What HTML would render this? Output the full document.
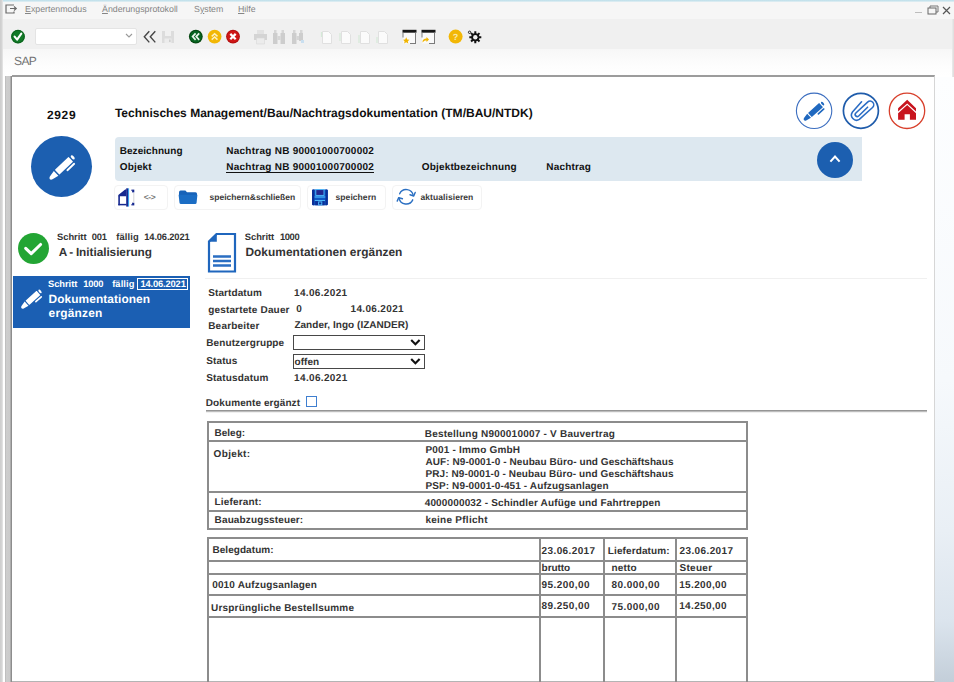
<!DOCTYPE html>
<html lang="de">
<head>
<meta charset="utf-8">
<title>SAP</title>
<style>
*{box-sizing:border-box;margin:0;padding:0}
html,body{width:954px;height:682px;overflow:hidden;background:#fff}
body{position:relative;font-family:"Liberation Sans",Arial,sans-serif;color:#333;font-weight:bold;font-size:10px;text-rendering:geometricPrecision}
.abs{position:absolute}
.t{position:absolute;white-space:pre;line-height:1}
/* chrome */
#menubar{left:0;top:0;width:954px;height:19px;background:#f6f6f6}
#topline{left:0;top:0;width:954px;height:2px;background:linear-gradient(#b9dde9,#e4f0f4)}
#toolbar{left:0;top:19px;width:954px;height:30px;background:#f0f0f0}
#titlebar{left:0;top:49px;width:954px;height:27px;background:linear-gradient(#f7f7f7,#fdfdfd 60%,#fff)}
.menu{font-weight:normal;font-size:8.8px;color:#858585;top:5px}
.menu u{text-decoration-thickness:1px;text-underline-offset:1px}
#leftstrip{left:0;top:0;width:3px;height:682px;background:linear-gradient(90deg,#cdcdcd,#d6d6d6 2px,#ececec)}
#leftbar{left:5px;top:76px;width:7px;height:606px;background:linear-gradient(90deg,#b4b4b4 0,#cdcdcd 1.200px,#cbcbcb 5px,#909090 6px,#8a8a8a 7px)}
#panel{left:12px;top:75px;width:923px;height:607px;background:#fff;border-top:2px solid #9c9c9c;border-right:1px solid #d6d6d6;border-bottom:1px solid #b4b4b4}
#rightstrip{left:935px;top:77px;width:19px;height:605px;background:linear-gradient(#fdfeff 0,#f6f9fc 50%,#e9eff5 75%,#dbe4ed 90%,#c3ced9 100%)}
#rightedge{left:952px;top:19px;width:2px;height:663px;background:linear-gradient(90deg,#ececec,#dcdcdc)}
/* header */
#infobar{left:115px;top:137px;width:747px;height:44px;background:#dde8f0;border-radius:4px 0 0 4px}
.btn{position:absolute;top:185px;height:25px;background:#fff;border:1px solid #f3f3f3;border-radius:4px}
.bt{font-size:8.5px;color:#3a3a3a}
.circ{position:absolute;border-radius:50%}
/* table */
table.g{position:absolute;table-layout:fixed;border-collapse:separate;border-spacing:0;border:1px solid #8c8c8c;font-size:10px;font-weight:bold;color:#333}
table.g td{position:relative;border:1px solid #8c8c8c;vertical-align:top;padding:0;white-space:pre;line-height:12px}
</style>
</head>
<body>
<!-- window chrome -->
<div class="abs" id="menubar"></div>
<div class="abs" id="topline"></div>
<div class="abs" id="toolbar"></div>
<div class="abs" id="titlebar"></div>
<div class="abs" id="leftstrip"></div>
<div class="abs" id="rightedge"></div>

<!-- menu -->
<svg class="abs" style="left:5px;top:4px" width="14" height="11" viewBox="0 0 14 11"><path d="M9 1H1v8h8V7.5" fill="none" stroke="#6a6a6a" stroke-width="1.2"/><path d="M5 4.5h6M9 2.5l2.3 2-2.3 2" fill="none" stroke="#6a6a6a" stroke-width="1.1"/></svg>
<span class="t menu" style="left:25px"><u>E</u>xpertenmodus</span>
<span class="t menu" style="left:102px"><u>Ä</u>nderungsprotokoll</span>
<span class="t menu" style="left:194px">S<u>y</u>stem</span>
<span class="t menu" style="left:238px"><u>H</u>ilfe</span>
<!-- window buttons -->
<div class="abs" style="left:915px;top:12px;width:7px;height:1px;background:#bdbdbd"></div>
<svg class="abs" style="left:927px;top:5px" width="12" height="10" viewBox="0 0 12 10"><path d="M3 3V1h8v6H9" fill="none" stroke="#777" stroke-width="1"/><rect x="1" y="3" width="8" height="6" fill="#f6f6f6" stroke="#666" stroke-width="1"/></svg>
<svg class="abs" style="left:942px;top:6px" width="9" height="9" viewBox="0 0 9 9"><path d="M1 1l7 7M8 1l-7 7" stroke="#555" stroke-width="1.2"/></svg>

<!-- toolbar -->
<!-- green check -->
<svg class="abs" style="left:10px;top:29px" width="16" height="16" viewBox="0 0 16 16"><circle cx="8" cy="7.6" r="6.9" fill="#117a27"/><circle cx="8" cy="7.6" r="6.2" fill="none" stroke="#0b5a1b" stroke-width=".8"/><path d="M4.6 7.6l2.5 3 4.2-6" fill="none" stroke="#fff" stroke-width="2.1" stroke-linecap="round" stroke-linejoin="round"/></svg>
<!-- command field -->
<div class="abs" style="left:35px;top:28px;width:102px;height:17px;background:#fff;border:1px solid #e4e4e4;border-radius:2px"></div>
<svg class="abs" style="left:125px;top:33px" width="8" height="6" viewBox="0 0 8 6"><path d="M1 1l3 3 3-3" fill="none" stroke="#9a9a9a" stroke-width="1.1"/></svg>
<!-- double chevron -->
<svg class="abs" style="left:143px;top:30px" width="14" height="14" viewBox="0 0 14 14"><path d="M6.3 1.2L1.3 6.8l5 5.6M12.3 1.2L7.3 6.8l5 5.6" fill="none" stroke="#454545" stroke-width="1.4"/></svg>
<!-- save disabled -->
<svg class="abs" style="left:161px;top:30px" width="14" height="14" viewBox="0 0 14 14"><path d="M1 1h12v12H1z" fill="#dcdcdc"/><path d="M4 1h6v5H4z" fill="#f0f0f0"/><path d="M3.5 8.5h7V13h-7z" fill="#ececec"/><path d="M8 9.5h1.6v2.6H8z" fill="#cfcfcf"/></svg>
<!-- back / exit / cancel -->
<svg class="abs" style="left:188px;top:29px" width="16" height="16" viewBox="0 0 16 16"><circle cx="7.8" cy="7.6" r="6.900" fill="#04450f"/><circle cx="7.8" cy="7.6" r="5.900" fill="#076320"/><path d="M7.6 4.4L4.6 7.6l3 3.2M11.2 4.4l-3 3.2 3 3.2" fill="none" stroke="#e9f5ea" stroke-width="1.7"/></svg>
<svg class="abs" style="left:207px;top:29px" width="16" height="16" viewBox="0 0 16 16"><circle cx="7.6" cy="7.6" r="6.9" fill="#f2b705"/><path d="M4.7 7.4l2.9-2.6 2.9 2.6M4.7 10.6l2.9-2.6 2.9 2.6" fill="none" stroke="#fdf0c0" stroke-width="1.5"/></svg>
<svg class="abs" style="left:225px;top:29px" width="16" height="16" viewBox="0 0 16 16"><circle cx="8" cy="7.6" r="6.900" fill="#b30f0f"/><circle cx="8" cy="7.6" r="5.900" fill="#cf1616"/><path d="M5.3 4.9l5.4 5.4M10.7 4.9l-5.4 5.4" fill="none" stroke="#fff" stroke-width="2.2"/></svg>
<!-- print (disabled) -->
<svg class="abs" style="left:253px;top:29px" width="15" height="16" viewBox="0 0 15 16"><path d="M4 1h7v4H4z" fill="#e2e2e2"/><path d="M1 5h13v6H1z" fill="#d4d4d4"/><path d="M3.5 9h8v6h-8z" fill="#ececec" stroke="#d8d8d8" stroke-width=".6"/></svg>
<!-- find / find next (disabled) -->
<svg class="abs" style="left:272px;top:29px" width="14" height="16" viewBox="0 0 14 16"><path d="M1 4h4.5v11H1zM8.500 4H13v11H8.500z" fill="#cdcdcd"/><path d="M2 1h2.500v3H2zM9.500 1H12v3H9.500zM5.500 7h3v4h-3z" fill="#d6d6d6"/></svg>
<svg class="abs" style="left:291px;top:29px" width="14" height="16" viewBox="0 0 14 16"><path d="M1 4h4.500v11H1zM8 4h4v8H8z" fill="#cdcdcd"/><path d="M2 1h2.500v3H2zM9 1h2.500v3H9zM5.500 7H8v4H5.500z" fill="#d6d6d6"/><path d="M10 11h3v3h-3z" fill="#c9dff0"/></svg>
<!-- pages (disabled) -->
<svg class="abs" style="left:320px;top:30px" width="70" height="15" viewBox="0 0 70 15"><g fill="#fbfbfb" stroke="#e0e0e0" stroke-width="1"><path d="M2.500 1.500h6l3 3v9h-9z"/><path d="M21.500 1.500h6l3 3v9h-9z"/><path d="M40.500 1.500h6l3 3v9h-9z"/><path d="M58.500 1.500h6l3 3v9h-9z"/></g><g fill="none" stroke="#d5ead8" stroke-width="1.2"><path d="M1.500 2v5"/><path d="M20 3v8"/><path d="M39 5v8"/><path d="M57 7v6"/></g></svg>
<!-- window icons -->
<svg class="abs" style="left:402px;top:29px" width="15" height="16" viewBox="0 0 15 16"><path d="M1 2.500h13v12H1z" fill="#fafafa"/><path d="M.5 .800h14v2.900H.5z" fill="#161616"/><path d="M13.500 3.500v11M8 14.500h6M1 3.500v5" fill="none" stroke="#7b7b7b" stroke-width="1"/><path d="M4.200 8.300l1 2.100 2.300.3-1.700 1.500.5 2.300-2.100-1.200-2 1.200.4-2.300L1 10.700l2.200-.3z" fill="#f0b400"/></svg>
<svg class="abs" style="left:421px;top:29px" width="15" height="16" viewBox="0 0 15 16"><path d="M1 2.500h13v12H1z" fill="#fafafa"/><path d="M.5 .800h14v2.900H.5z" fill="#161616"/><path d="M13.500 3.500v11M8 14.500h6M1 3.500v5" fill="none" stroke="#7b7b7b" stroke-width="1"/><path d="M1.500 13.500c0-3 1.500-4 4-4V8l2.500 2.500L5.500 13v-1.500c-1.500 0-2.500.3-4 2z" fill="#f0b400"/></svg>
<!-- help -->
<svg class="abs" style="left:448px;top:29px" width="16" height="16" viewBox="0 0 16 16"><circle cx="7.600" cy="7.600" r="7" fill="#f2b705"/><text x="7.600" y="11" text-anchor="middle" font-family="Liberation Sans,sans-serif" font-weight="bold" font-size="9" fill="#fbe9a8">?</text></svg>
<!-- gear -->
<svg class="abs" style="left:467px;top:29px" width="16" height="16" viewBox="0 0 16 16"><g stroke="#111" stroke-width="2"><path d="M8.300 2.300v12M2.300 8.300h12M4.100 4.100l8.400 8.400M12.500 4.100L4.100 12.500"/></g><circle cx="8.300" cy="8.300" r="4.100" fill="#111"/><circle cx="8.300" cy="8.300" r="2.200" fill="#f0f0f0"/><circle cx="2.600" cy="3.300" r="1.200" fill="#f0f0f0" stroke="#111" stroke-width=".9"/></svg>

<span class="t" style="left:14px;top:55px;font-weight:normal;font-size:12px;letter-spacing:-.6px;color:#727272">SAP</span>

<!-- content panel -->
<div class="abs" id="leftbar"></div>
<div class="abs" id="panel"></div>
<div class="abs" id="rightstrip"></div>

<!--CONTENT-->
<span class="t" style="left:46.88px;top:109px;font-size:12px;letter-spacing:0.681px;color:#111">2929</span>
<span class="t" style="left:114.88px;top:107px;font-size:12px;letter-spacing:0.011px;color:#111">Technisches Management/Bau/Nachtragsdokumentation (TM/BAU/NTDK)</span>
<div class="circ" style="left:31px;top:136px;width:61px;height:61px;background:#1c5fb0"></div>
<svg class="abs" style="left:40px;top:145px" width="44" height="44" viewBox="40 145 44 44"><g transform="translate(49.6 179.5) rotate(-43.7) scale(1)" fill="#fff"><path d="M.4 0C.4-.9 1.200-1.500 2.200-1.900L9-3.300V3.300L2.200 1.900C1.200 1.500 .4 .9 .4 0z"/><rect x="10.400" y="-3.300" width="18.900" height="6.600" rx=".5"/><ellipse cx="32" cy="0" rx="1.400" ry="2.500"/><path d="M19.300 5.600H28.600" stroke="#fff" stroke-width="1.900" stroke-linecap="round" fill="none"/></g></svg>
<div class="abs" id="infobar"></div>
<span class="t" style="left:119.70px;top:147px;letter-spacing:0.057px;color:#111">Bezeichnung</span>
<span class="t" style="left:226.20px;top:147px;letter-spacing:0.260px;color:#111">Nachtrag NB 90001000700002</span>
<span class="t" style="left:119.70px;top:163px;letter-spacing:0.176px;color:#111">Objekt</span>
<span class="t" style="left:226.20px;top:163px;letter-spacing:0.260px;color:#111">Nachtrag NB 90001000700002</span>
<div class="abs" style="left:226px;top:172px;width:148px;height:1px;background:#111"></div>
<span class="t" style="left:421.80px;top:163px;letter-spacing:0.160px;color:#111">Objektbezeichnung</span>
<span class="t" style="left:546.30px;top:163px;letter-spacing:0.179px;color:#111">Nachtrag</span>
<div class="circ" style="left:817px;top:142px;width:36px;height:36px;background:#1c5fb0"></div>
<svg class="abs" style="left:827px;top:152px" width="16" height="14" viewBox="827 152 16 14"><path d="M830.400 161.700L835 156.600L839.600 161.700" fill="none" stroke="#fff" stroke-width="2"/></svg>
<svg class="abs" style="left:794px;top:90px" width="134" height="42" viewBox="794 90 134 42"><circle cx="814.100" cy="110.800" r="17.700" fill="#fff" stroke="#3d6fc0" stroke-width="1.100"/><circle cx="860.900" cy="110.800" r="17.500" fill="#fff" stroke="#1f5cab" stroke-width="1.700"/><circle cx="907" cy="110.800" r="17.700" fill="#fff" stroke="#d8402c" stroke-width="1.300"/></svg>
<svg class="abs" style="left:800px;top:97px" width="30" height="28" viewBox="800 97 30 28"><g transform="translate(803.8 120.5) rotate(-42) scale(0.79 0.86)" fill="#1f68bf"><path d="M.4 0C.4-.9 1.200-1.500 2.200-1.900L9-3.300V3.300L2.200 1.900C1.200 1.500 .4 .9 .4 0z"/><rect x="10.400" y="-3.300" width="18.900" height="6.600" rx=".5"/><ellipse cx="32" cy="0" rx="1.400" ry="2.500"/><path d="M19.300 5.600H28.600" stroke="#1f68bf" stroke-width="1.900" stroke-linecap="round" fill="none"/></g></svg>
<svg class="abs" style="left:846px;top:96px" width="30" height="30" viewBox="846 96 30 30"><g transform="translate(861.300 111.200) rotate(-42.500) scale(1.080)"><path d="M6.100 -6.300L-6.500 -5A4.800 4.800 0 0 0 -6.500 4.400L10 4.500A3.400 3.400 0 0 0 10 -2.300L-4.800 -2.200A1.900 1.900 0 0 0 -4.800 1.600L6.800 1.200" fill="none" stroke="#2a6cc4" stroke-width="1.450" stroke-linecap="round" stroke-linejoin="round"/></g></svg>
<svg class="abs" style="left:897px;top:99px" width="20" height="22" viewBox="897 99 20 22"><g fill="#c8141e"><path d="M907.200 99.800L916 108.300V111.500L907.200 103.600L898.100 111.500V108.300z"/><path d="M907.200 105L916 113.200V119.700H909.900V114.200H904.600V119.700H898.100V113.200z"/></g></svg>
<div class="btn" style="left:113.500px;width:54.500px"></div>
<svg class="abs" style="left:116px;top:187px" width="22" height="21" viewBox="116 187 22 21"><path d="M119.100 205.300V195.500L126 189.900" fill="none" stroke="#16288f" stroke-width="1.600"/><path d="M118.300 204.600H126.500" stroke="#16288f" stroke-width="1.500"/><path d="M118.300 196.200L126.300 189.400V196.200z" fill="#16288f"/><rect x="126.200" y="188.300" width="1.800" height="18.300" fill="#16288f"/><rect x="128" y="188.300" width="1.100" height="18.300" fill="#3aa0e8"/><rect x="132.100" y="189.600" width="2.200" height="2.800" fill="#16288f"/><rect x="132.100" y="202.700" width="2.200" height="2.700" fill="#16288f"/><rect x="131" y="189.600" width="1.200" height="1.300" fill="#16288f" opacity=".6"/><rect x="131" y="204.100" width="1.200" height="1.300" fill="#16288f" opacity=".6"/><path d="M133.800 193V202.300" stroke="#cfcfcf" stroke-width=".9"/></svg>
<span class="t" style="left:143.69px;top:193px;font-size:8.5px;letter-spacing:-0.320px;color:#777">&lt;-&gt;</span>
<div class="btn" style="left:174px;width:127px"></div>
<svg class="abs" style="left:177px;top:189px" width="22" height="17" viewBox="177 189 22 17"><path d="M179 192.400Q179 190.600 180.600 190.600H185.400L187 192.300H195.500Q197 192.300 197 193.800V195H179z" fill="#1762b8"/><path d="M178.600 194.700H197.400L196.600 202.700Q196.500 204.100 195.100 204.100H181Q179.600 204.100 179.500 202.700z" fill="#1b6dc4"/></svg>
<span class="t" style="left:209.49px;top:193px;font-size:8.5px;letter-spacing:0.012px;color:#3a3a3a">speichern&amp;schließen</span>
<div class="btn" style="left:307px;width:79px"></div>
<svg class="abs" style="left:311px;top:188px" width="18" height="19" viewBox="311 188 18 19"><rect x="312" y="189.400" width="15.800" height="15.900" rx="1.200" fill="#0f57c4"/><path d="M312 190.600Q312 189.400 313.200 189.400H314.300V205.300H313.200Q312 205.300 312 204.100zM327.800 190.600Q327.800 189.400 326.600 189.400H325.500V205.300H326.600Q327.800 205.300 327.800 204.100z" fill="#0b2f96"/><rect x="315.800" y="189.600" width="8.200" height="5.800" fill="#23278f" stroke="#52c0ff" stroke-width=".9"/><path d="M314.600 197H325.300" stroke="#52c0ff" stroke-width="1.100"/><path d="M314.800 200.600H325" stroke="#52c0ff" stroke-width="1"/><rect x="315.200" y="201.100" width="9.400" height="4.200" fill="#0b2f96"/><rect x="318.600" y="201.900" width="3.200" height="3" fill="none" stroke="#52c0ff" stroke-width=".9"/></svg>
<span class="t" style="left:335.59px;top:193px;font-size:8.5px;letter-spacing:0.058px;color:#3a3a3a">speichern</span>
<div class="btn" style="left:392px;width:90px"></div>
<svg class="abs" style="left:394px;top:186px" width="24" height="22" viewBox="394 186 24 22"><g transform="translate(395 187) translate(11.200 9.800) scale(.900) translate(-11.200 -9.800)" fill="none" stroke="#2a6fc2" stroke-width="1.550" stroke-linecap="round" stroke-linejoin="round"><path d="M3.950 6.420A8 8 0 0 1 19.080 8.410"/><path d="M18.450 13.180A8 8 0 0 1 3.320 11.190"/><path d="M21.200 5L19.600 8.900L15.400 7.500"/><path d="M1.200 14.600L2.900 10.700L7 12"/></g></svg>
<span class="t" style="left:420.49px;top:193px;font-size:8.5px;letter-spacing:0.071px;color:#3a3a3a">aktualisieren</span>
<div class="circ" style="left:18px;top:233px;width:31px;height:31px;background:#23a534"></div>
<svg class="abs" style="left:22px;top:238px" width="23" height="21" viewBox="22 238 23 21"><path d="M25.700 248.300L31.200 253.600L40.600 244.500" fill="none" stroke="#fff" stroke-width="3.100" stroke-linecap="round" stroke-linejoin="round"/></svg>
<span class="t" style="left:57.04px;top:233px;font-size:9.35px;letter-spacing:-0.015px">Schritt</span>
<span class="t" style="left:91.64px;top:233px;font-size:9.35px;letter-spacing:-0.090px">001</span>
<span class="t" style="left:116.34px;top:233px;font-size:9.35px;letter-spacing:0.101px">fällig</span>
<span class="t" style="left:144.34px;top:233px;font-size:9.35px;letter-spacing:-0.164px">14.06.2021</span>
<span class="t" style="left:58.69px;top:247px;font-size:11.8px;letter-spacing:-0.043px;word-spacing:-.6px">A - Initialisierung</span>
<div class="abs" style="left:13px;top:276px;width:177px;height:52px;background:#1b5fb3"></div>
<svg class="abs" style="left:18px;top:286px" width="28" height="26" viewBox="18 286 28 26"><g transform="translate(21.3 308.4) rotate(-42.2) scale(0.79 0.86)" fill="#fff"><path d="M.4 0C.4-.9 1.200-1.500 2.200-1.900L9-3.300V3.300L2.200 1.900C1.200 1.500 .4 .9 .4 0z"/><rect x="10.400" y="-3.300" width="18.900" height="6.600" rx=".5"/><ellipse cx="32" cy="0" rx="1.400" ry="2.500"/><path d="M19.300 5.600H28.600" stroke="#fff" stroke-width="1.900" stroke-linecap="round" fill="none"/></g></svg>
<span class="t" style="left:47.94px;top:280px;font-size:9.35px;letter-spacing:-0.032px;color:#fff">Schritt</span>
<span class="t" style="left:83.24px;top:280px;font-size:9.35px;letter-spacing:-0.160px;color:#fff">1000</span>
<span class="t" style="left:112.14px;top:280px;font-size:9.35px;letter-spacing:0.101px;color:#fff">fällig</span>
<div class="abs" style="left:137px;top:278px;width:50.500px;height:12px;border:1px solid #fff"></div>
<span class="t" style="left:140.44px;top:280px;font-size:9.35px;letter-spacing:-0.153px;color:#fff">14.06.2021</span>
<span class="t" style="left:48.59px;top:294px;font-size:11.9px;letter-spacing:0.074px;color:#fff">Dokumentationen</span>
<span class="t" style="left:48.59px;top:308px;font-size:11.9px;letter-spacing:0.212px;color:#fff">ergänzen</span>
<svg class="abs" style="left:207px;top:232px" width="30" height="41" viewBox="0 0 30 41"><path d="M9.500 2H28v37.500H2V9.500z" fill="#fff" stroke="#1f66bd" stroke-width="2.200" stroke-linejoin="miter"/><path d="M1.500 9.800L9.800 1.500v8.300z" fill="#1f66bd"/><path d="M6 24.500h18M6 29h18M6 33.500h18" stroke="#2a6ec2" stroke-width="2.400"/></svg>
<span class="t" style="left:244.84px;top:233px;font-size:9.35px;letter-spacing:-0.032px">Schritt</span>
<span class="t" style="left:280.04px;top:233px;font-size:9.35px;letter-spacing:-0.400px">1000</span>
<span class="t" style="left:245.39px;top:247px;font-size:11.9px;letter-spacing:0.047px">Dokumentationen ergänzen</span>
<div class="abs" style="left:205px;top:278px;width:722px;height:1px;background:#f0f0f0"></div>
<span class="t" style="left:208.20px;top:289px;letter-spacing:0.102px">Startdatum</span>
<span class="t" style="left:294.10px;top:289px;letter-spacing:0.328px">14.06.2021</span>
<span class="t" style="left:208.20px;top:306px;letter-spacing:0.159px">gestartete Dauer</span>
<span class="t" style="left:296.30px;top:305px;letter-spacing:0.338px">0</span>
<span class="t" style="left:350.50px;top:305px;letter-spacing:0.339px">14.06.2021</span>
<span class="t" style="left:208.20px;top:322px;letter-spacing:0.203px">Bearbeiter</span>
<span class="t" style="left:294.40px;top:321px;letter-spacing:0.032px">Zander, Ingo (IZANDER)</span>
<span class="t" style="left:206.30px;top:339px;letter-spacing:0.087px">Benutzergruppe</span>
<div class="abs" style="left:293px;top:335px;width:132px;height:15px;border:1px solid #484848;background:#fff"></div>
<svg class="abs" style="left:409px;top:338px" width="13" height="9" viewBox="409 338 13 9"><path d="M411.200 340L415.400 344.300L419.600 340" fill="none" stroke="#111" stroke-width="2.100"/></svg>
<span class="t" style="left:206.30px;top:357px;letter-spacing:0.108px">Status</span>
<div class="abs" style="left:293px;top:354px;width:132px;height:15px;border:1px solid #484848;background:#fff"></div>
<span class="t" style="left:294.60px;top:358px;letter-spacing:0.015px">offen</span>
<svg class="abs" style="left:409px;top:357px" width="13" height="9" viewBox="409 357 13 9"><path d="M411.200 359L415.400 363.300L419.600 359" fill="none" stroke="#111" stroke-width="2.100"/></svg>
<span class="t" style="left:206.30px;top:374px;letter-spacing:0.144px">Statusdatum</span>
<span class="t" style="left:294.10px;top:374px;letter-spacing:0.339px">14.06.2021</span>
<span class="t" style="left:205.80px;top:399px;letter-spacing:0.088px">Dokumente ergänzt</span>
<div class="abs" style="left:306px;top:396px;width:11px;height:11px;border:1px solid #3f7fd0;background:#fff"></div>
<div class="abs" style="left:206px;top:410px;width:721px;height:3px;background:linear-gradient(#959595 0,#959595 33%,#bdbdbd 34%,#bdbdbd 66%,#f0f0f0 67%)"></div>
<table class="g" style="left:207px;top:421px;width:541px" cellspacing="0">
<tr style="height:19px">
<td style="width:215px;border-right:0"><span class="t" style="left:5.60px;top:5px;line-height:12px;letter-spacing:-0.012px">Beleg:</span></td>
<td style="border-left:0"><span class="t" style="left:1.70px;top:6px;line-height:12px;letter-spacing:0.223px">Bestellung N900010007 - V Bauvertrag</span></td>
</tr>
<tr style="height:51px">
<td style="border-right:0"><span class="t" style="left:4.60px;top:7px;line-height:12px;letter-spacing:0.342px">Objekt:</span></td>
<td style="border-left:0"><span class="t" style="left:2.40px;top:3px;line-height:12px;letter-spacing:0.201px">P001 - Immo GmbH</span><span class="t" style="left:2.40px;top:15px;line-height:12px;letter-spacing:0.079px">AUF: N9-0001-0 - Neubau Büro- und Geschäftshaus</span><span class="t" style="left:2.40px;top:27px;line-height:12px;letter-spacing:0.103px">PRJ: N9-0001-0 - Neubau Büro- und Geschäftshaus</span><span class="t" style="left:2.40px;top:39px;line-height:12px;letter-spacing:0.120px">PSP: N9-0001-0-451 - Aufzugsanlagen</span></td>
</tr>
<tr style="height:19px">
<td style="border-right:0"><span class="t" style="left:5.60px;top:4px;line-height:12px;letter-spacing:0.160px">Lieferant:</span></td>
<td style="border-left:0"><span class="t" style="left:1.70px;top:5px;line-height:12px;letter-spacing:0.149px">4000000032 - Schindler Aufüge und Fahrtreppen</span></td>
</tr>
<tr style="height:18px">
<td style="border-right:0"><span class="t" style="left:5.60px;top:3px;line-height:12px;letter-spacing:0.128px">Bauabzugssteuer:</span></td>
<td style="border-left:0"><span class="t" style="left:2.40px;top:3px;line-height:12px;letter-spacing:0.266px">keine Pflicht</span></td>
</tr>
</table>
<table class="g" style="left:207px;top:537px;width:541px" cellspacing="0">
<tr style="height:23px">
<td style="width:332px"><span class="t" style="left:3.40px;top:6px;line-height:12px;letter-spacing:0.064px">Belegdatum:</span></td>
<td style="width:64px"><span class="t" style="left:0.60px;top:7px;line-height:12px;letter-spacing:0.383px">23.06.2017</span></td>
<td style="width:72px"><span class="t" style="left:2.80px;top:7px;line-height:12px;letter-spacing:0.113px">Lieferdatum:</span></td>
<td style="width:71px"><span class="t" style="left:2.50px;top:7px;line-height:12px;letter-spacing:0.394px">23.06.2017</span></td>
</tr>
<tr style="height:13px">
<td></td>
<td><span class="t" style="left:0.60px;top:1px;line-height:12px;letter-spacing:-0.076px">brutto</span></td>
<td><span class="t" style="left:6.60px;top:1px;line-height:12px;letter-spacing:0.140px">netto</span></td>
<td><span class="t" style="left:2.50px;top:1px;line-height:12px;letter-spacing:0.295px">Steuer</span></td>
</tr>
<tr style="height:21px">
<td><span class="t" style="left:3.20px;top:5px;line-height:12px;letter-spacing:0.157px">0010 Aufzugsanlagen</span></td>
<td><span class="t" style="left:0.60px;top:5px;line-height:12px;letter-spacing:0.439px">95.200,00</span></td>
<td><span class="t" style="left:6.60px;top:5px;line-height:12px;letter-spacing:0.439px">80.000,00</span></td>
<td><span class="t" style="left:2.20px;top:5px;line-height:12px;letter-spacing:0.364px">15.200,00</span></td>
</tr>
<tr style="height:22px">
<td><span class="t" style="left:2.10px;top:7px;line-height:12px;letter-spacing:0.181px">Ursprüngliche Bestellsumme</span></td>
<td><span class="t" style="left:0.60px;top:5px;line-height:12px;letter-spacing:0.439px">89.250,00</span></td>
<td><span class="t" style="left:6.60px;top:6px;line-height:12px;letter-spacing:0.439px">75.000,00</span></td>
<td><span class="t" style="left:2.20px;top:5px;line-height:12px;letter-spacing:0.364px">14.250,00</span></td>
</tr>
<tr style="height:80px">
<td></td>
<td></td>
<td></td>
<td></td>
</tr>
</table>
<!--/CONTENT-->
</body>
</html>
